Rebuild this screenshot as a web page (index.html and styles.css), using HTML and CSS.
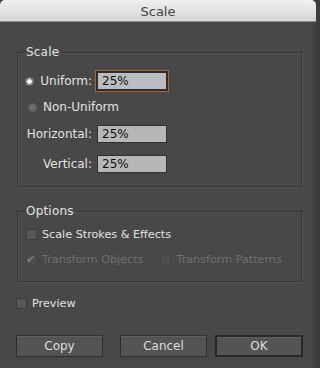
FILE: index.html
```html
<!DOCTYPE html>
<html lang="en">
<head>
    <meta charset="UTF-8">
    <title>Scale</title>
    <link rel="stylesheet" href="styles.css">
</head>
<body>
    <div class="window">
        <div class="titlebar">Scale</div>

        <div class="dialog">
            <fieldset class="group group-scale">
                <legend>Scale</legend>

                <div class="scale-grid">
                    <label class="field-label">
                        <span class="radio checked"></span>
                        <span>Uniform:</span>
                    </label>
                    <input type="text" class="field focused" value="25%">

                    <label class="field-label wide">
                        <span class="radio"></span>
                        <span>Non-Uniform</span>
                    </label>

                    <label class="field-label">Horizontal:</label>
                    <input type="text" class="field" value="25%">

                    <label class="field-label">Vertical:</label>
                    <input type="text" class="field" value="25%">
                </div>
            </fieldset>

            <fieldset class="group group-options">
                <legend>Options</legend>

                <div class="option-row">
                    <label class="check-label">
                        <span class="checkbox"></span>
                        <span>Scale Strokes &amp; Effects</span>
                    </label>
                </div>

                <div class="option-row tall">
                    <label class="check-label disabled">
                        <span class="checkbox checked">&#10004;</span>
                        <span>Transform Objects</span>
                    </label>
                    <label class="check-label disabled">
                        <span class="checkbox"></span>
                        <span>Transform Patterns</span>
                    </label>
                </div>
            </fieldset>

            <label class="check-label preview">
                <span class="checkbox"></span>
                <span>Preview</span>
            </label>

            <div class="buttons">
                <button class="btn">Copy</button>
                <button class="btn">Cancel</button>
                <button class="btn btn-default">OK</button>
            </div>
        </div>
    </div>
</body>
</html>
```

FILE: styles.css
```css
* {
    margin: 0;
    padding: 0;
    box-sizing: border-box;
}

body {
    font-family: 'DejaVu Sans', 'Liberation Sans', sans-serif;
    font-size: 12px;
    background: #3d3d3d;
    width: 320px;
    height: 368px;
    overflow: hidden;
}

.window {
    width: 316px;
    height: 368px;
}

.titlebar {
    height: 22px;
    line-height: 23px;
    text-align: center;
    font-size: 13px;
    color: #444;
    background: linear-gradient(#f0f0f0, #d4d4d4);
    border-bottom: 1px solid #8e8e8e;
    border-radius: 5px 5px 0 0;
}

.dialog {
    height: 346px;
    background: #484848;
    border-right: 3px solid #3f3f3f;
    padding: 23px 11px 0 17px;
}

/* 分组框 */
.group {
    border: 1px solid #363636;
    box-shadow: inset 1px 1px 0 #525252, 1px 1px 0 #525252;
    padding: 0 8px;
}

.group legend {
    margin-left: -1px;
    padding: 0 2px 0 1px;
    color: #e2e2e2;
    font-size: 12px;
    line-height: 15px;
    letter-spacing: 0.2px;
}

.group-scale {
    padding-top: 8px;
    padding-bottom: 6px;
}

.scale-grid {
    display: grid;
    grid-template-columns: 66px 72px;
    grid-template-rows: 26px 26px 28px 32px;
    column-gap: 4px;
    align-items: center;
}

.field-label {
    justify-self: end;
    display: flex;
    align-items: center;
    gap: 6px;
    color: #e2e2e2;
    white-space: nowrap;
}

.field-label.wide {
    grid-column: 1 / 3;
    justify-self: start;
    margin-left: 2px;
}

.radio {
    width: 9px;
    height: 9px;
    border-radius: 50%;
    background: #6b6b6b;
    border: 1px solid #5a5a5a;
    display: inline-block;
}

.radio.checked {
    background: radial-gradient(circle, #ffffff 0 2px, #8c8c8c 2.5px);
    border-color: #777;
}

.field {
    width: 70px;
    height: 18px;
    justify-self: center;
    border: 1px solid #2f2f2f;
    background: #b7b7b7;
    color: #111;
    font-family: inherit;
    font-size: 12px;
    padding: 0 4px;
    outline: none;
}

.field.focused {
    background: #b9bcc2;
    box-shadow: 0 0 0 1px #3a2a18, 0 0 0 2px #9a6a38;
}

.group-options {
    margin-top: 17px;
    padding-top: 3px;
    padding-bottom: 9px;
}

.option-row {
    height: 24px;
    display: flex;
    align-items: center;
    gap: 17px;
}

.option-row.tall {
    height: 26px;
}

.check-label {
    display: flex;
    align-items: center;
    gap: 5px;
    color: #e2e2e2;
    font-size: 11.2px;
    white-space: nowrap;
}

.check-label.disabled {
    color: #6f6f6f;
}

.checkbox {
    width: 11px;
    height: 11px;
    background: #575757;
    border: 1px solid #3c3c3c;
    display: inline-block;
    font-size: 11px;
    line-height: 9px;
    color: #7a7a7a;
    text-indent: -1px;
}

.check-label.disabled .checkbox {
    background: #4e4e4e;
    border-color: #444;
}

.preview {
    margin: 13px 0 0 -1px;
    height: 16px;
}

.buttons {
    display: flex;
    margin-top: 24px;
    width: 288px;
    margin-left: -1px;
}

.btn {
    width: 87px;
    height: 22px;
    background: #545454;
    border: 1px solid #2e2e2e;
    box-shadow: inset 0 1px 0 #606060;
    color: #dedede;
    font-family: inherit;
    font-size: 12px;
    margin-right: 17px;
}

.btn:nth-child(2) {
    margin-right: 8px;
}

.btn-default {
    width: 88px;
    margin-right: 0;
    border: 2px solid #282828;
}
```
